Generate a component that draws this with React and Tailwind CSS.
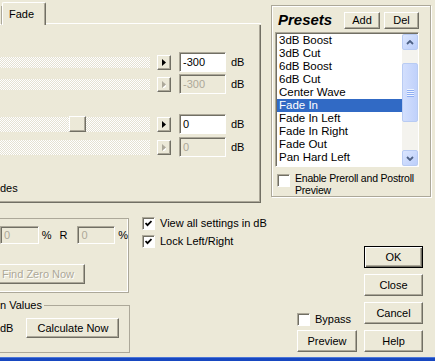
import React from 'react';

const sunken = 'border border-t-[#aca899] border-l-[#aca899] border-r-white border-b-white shadow-[inset_1px_1px_0_#716f64]';
const raised = 'border border-t-white border-l-white border-r-[#716f64] border-b-[#716f64] shadow-[inset_-1px_-1px_0_#aca899]';
const band = 'bg-[conic-gradient(#ffffff_25%,#e4e1d2_0_50%,#ffffff_0_75%,#e4e1d2_0)] bg-size-[2px_2px]';

const presets = [
    '3dB Boost',
    '3dB Cut',
    '6dB Boost',
    '6dB Cut',
    'Center Wave',
    'Fade In',
    'Fade In Left',
    'Fade In Right',
    'Fade Out',
    'Pan Hard Left',
    'Pan Hard Right',
];

const ArrowBtn = ({ disabled }) => (
    <div className={`w-[14px] h-[15px] flex items-center justify-center bg-[#ece9d8] ${raised}`}>
        <svg width="4" height="7" viewBox="0 0 4 7">
            {disabled && <path d="M1 1 L5 4.5 L1 8Z" fill="#ffffff" />}
            <path d="M0 0 L4 3.5 L0 7Z" fill={disabled ? '#aca899' : '#000000'} />
        </svg>
    </div>
);

const Field = ({ value, disabled, className }) => (
    <div className={`${sunken} ${disabled ? 'bg-[#ece9d8] text-[#aca899]' : 'bg-white'} pl-[3px] flex items-center ${className}`}>
        {value}
    </div>
);

const Check = ({ checked }) => (
    <div className={`w-[13px] h-[13px] shrink-0 bg-white ${sunken} flex items-center justify-center`}>
        {checked && (
            <svg width="7" height="7" viewBox="0 0 7 7">
                <polyline points="0.5,3 2.5,5.2 6.5,1" fill="none" stroke="#000" strokeWidth="1.8" />
            </svg>
        )}
    </div>
);

const Btn = ({ children, className, disabled, isDefault }) => (
    <div
        className={`flex items-center justify-center bg-[#ece9d8] ${
            isDefault
                ? 'border border-black shadow-[inset_1px_1px_0_#ffffff,inset_-1px_-1px_0_#716f64,inset_-2px_-2px_0_#aca899]'
                : raised
        } ${disabled ? 'text-[#aca899] [text-shadow:1px_1px_0_#ffffff]' : ''} ${className}`}
    >
        {children}
    </div>
);

const SliderRow = ({ value, disabled, tall, thumb, className }) => (
    <div className={`flex items-center h-[20px] ${className}`}>
        <div className={`w-[150px] flex items-center ${tall ? 'h-[15px]' : 'h-[11px]'} ${band}`}>
            {thumb && <div className={`ml-[69px] w-[17px] h-[16px] bg-[#ece9d8] ${raised}`} />}
        </div>
        <div className="ml-[7px]">
            <ArrowBtn disabled={disabled} />
        </div>
        <Field value={value} disabled={disabled} className="ml-[8px] w-[47px] h-[20px]" />
        <span className="ml-[5px]">dB</span>
    </div>
);

const ScrollBtn = ({ up }) => (
    <div className="h-[16px] w-[16px] rounded-[2px] border border-[#b8cbf3] bg-linear-to-br from-[#dbe6fe] to-[#bccefa] flex items-center justify-center">
        <svg width="8" height="5" viewBox="0 0 8 5">
            <path d={up ? 'M1 4 L4 1 L7 4' : 'M1 1 L4 4 L7 1'} fill="none" stroke="#4d6185" strokeWidth="1.8" />
        </svg>
    </div>
);

const App = () => {
    return (
        <div className="w-[435px] h-[361px] overflow-hidden bg-[#ece9d8] text-black text-[11px] leading-[13px] font-['Liberation_Sans',Arial,sans-serif] flex flex-col">
            {/* top area */}
            <div className="flex h-[203px]">
                {/* tab control */}
                <div className="w-[261px] h-[203px] flex flex-col">
                    <div className="h-[25px] flex items-end">
                        <div className="w-[2px] h-[19px] border-r border-[#aca899] border-b border-b-white" />
                        <div className="w-[44px] h-[23px] border-t border-l border-white border-r border-r-[#716f64] shadow-[inset_-1px_0_0_#aca899] rounded-t-[2px] pl-[6px] pt-[5px]">
                            Fade
                        </div>
                        <div className="flex-1 h-px bg-white mb-px" />
                    </div>
                    <div className="flex-1 border-r border-b border-[#716f64] shadow-[inset_-1px_-1px_0_#aca899] flex flex-col pt-[27px]">
                        <SliderRow value="-300" />
                        <SliderRow value="-300" disabled className="mt-[2px]" />
                        <SliderRow value="0" tall thumb className="mt-[20px]" />
                        <SliderRow value="0" tall disabled className="mt-[3px]" />
                        <div className="mt-[25px]">des</div>
                    </div>
                </div>

                {/* presets group */}
                <div className="ml-[10px] mt-[5px] w-[160px] h-[192px] border border-[#aca899] shadow-[inset_1px_1px_0_#ffffff,1px_1px_0_#ffffff] pl-[3px] pr-[11px] flex flex-col">
                    <div className="mt-[5px] h-[18px] flex items-center">
                        <span className="ml-[3px] text-[15px] font-bold italic leading-[18px]">Presets</span>
                        <Btn className="ml-auto w-[36px] h-[17px]">Add</Btn>
                        <Btn className="ml-[4px] w-[35px] h-[17px]">Del</Btn>
                    </div>
                    <div className={`mt-[3px] w-[144px] h-[136px] bg-white ${sunken} pl-[1px] pt-[1px] flex overflow-hidden`}>
                        <div className="flex-1 flex flex-col overflow-hidden text-[11.5px]">
                            {presets.map((p) => (
                                <div
                                    key={p}
                                    className={`h-[13px] shrink-0 leading-[13px] pl-[2px] whitespace-nowrap ${
                                        p === 'Fade In' ? 'bg-[#316ac5] text-white' : ''
                                    }`}
                                >
                                    {p}
                                </div>
                            ))}
                        </div>
                        <div className="w-[16px] h-[132px] bg-[#f4f3ee] flex flex-col">
                            <ScrollBtn up />
                            <div className="h-[13px] shrink-0" />
                            <div className="h-[59px] shrink-0 rounded-[2px] border border-[#b8cbf3] bg-linear-to-r from-[#d3dffd] to-[#c0d1fb] flex flex-col items-center justify-center gap-[1px]">
                                <div className="w-[7px] h-px bg-[#eef4ff] shadow-[0_1px_0_#8faef3]" />
                                <div className="w-[7px] h-px bg-[#eef4ff] shadow-[0_1px_0_#8faef3]" />
                                <div className="w-[7px] h-px bg-[#eef4ff] shadow-[0_1px_0_#8faef3]" />
                                <div className="w-[7px] h-px bg-[#eef4ff] shadow-[0_1px_0_#8faef3]" />
                            </div>
                            <div className="flex-1" />
                            <ScrollBtn />
                        </div>
                    </div>
                    <div className="mt-[5px] ml-[2px] flex items-start">
                        <div className="mt-[2px]">
                            <Check />
                        </div>
                        <div className="ml-[5px] text-[10.5px] tracking-[-0.2px] leading-[12px] whitespace-nowrap">
                            Enable Preroll and Postroll
                            <br />
                            Preview
                        </div>
                    </div>
                </div>
            </div>

            {/* bottom area */}
            <div className="flex h-[154px]">
                <div className="w-[131px] flex flex-col">
                    <div className="mt-[15px] h-[75px] w-[129px] border-t border-r border-b border-[#aca899] shadow-[inset_-1px_-1px_0_#ffffff] flex flex-col">
                        <div className="mt-[7px] h-[18px] flex items-center">
                            <Field value="0" disabled className="w-[42px] h-[18px]" />
                            <span className="ml-[3px]">%</span>
                            <span className="ml-[8px]">R</span>
                            <Field value="0" disabled className="ml-[10px] w-[41px] h-[18px]" />
                            <span className="ml-[3px]">%</span>
                        </div>
                        <Btn disabled className="-ml-[9px] mt-[20px] w-[94px] h-[20px]">
                            Find Zero Now
                        </Btn>
                    </div>
                    <fieldset className="mt-[6px] h-[54px] w-[130px] border border-l-0 border-[#aca899] p-0 pl-0">
                        <legend className="p-0 pr-[2px] leading-[13px]">n Values</legend>
                        <div className="mt-[6px] flex items-center">
                            <span>dB</span>
                            <Btn className="ml-[13px] w-[93px] h-[20px]">Calculate Now</Btn>
                        </div>
                    </fieldset>
                </div>

                <div className="w-[166px] pl-[11px] pt-[14px] flex flex-col gap-[5px]">
                    <div className="flex items-center">
                        <Check checked />
                        <span className="ml-[5px] whitespace-nowrap">View all settings in dB</span>
                    </div>
                    <div className="flex items-center">
                        <Check checked />
                        <span className="ml-[5px] whitespace-nowrap">Lock Left/Right</span>
                    </div>
                </div>

                <div className="w-[60px] flex flex-col justify-end pb-[5px]">
                    <div className="flex items-center">
                        <Check />
                        <span className="ml-[5px]">Bypass</span>
                    </div>
                    <Btn className="mt-[4px] w-[60px] h-[22px]">Preview</Btn>
                </div>

                <div className="ml-[7px] w-[59px] pt-[43px] flex flex-col gap-[6px]">
                    <Btn isDefault className="h-[22px]">OK</Btn>
                    <Btn className="h-[22px]">Close</Btn>
                    <Btn className="h-[22px]">Cancel</Btn>
                    <Btn className="h-[22px]">Help</Btn>
                </div>
            </div>

            <div className="h-[4px] bg-[#1747c0] border-t border-[#4b76d8]" />
        </div>
    );
};

export default App;
